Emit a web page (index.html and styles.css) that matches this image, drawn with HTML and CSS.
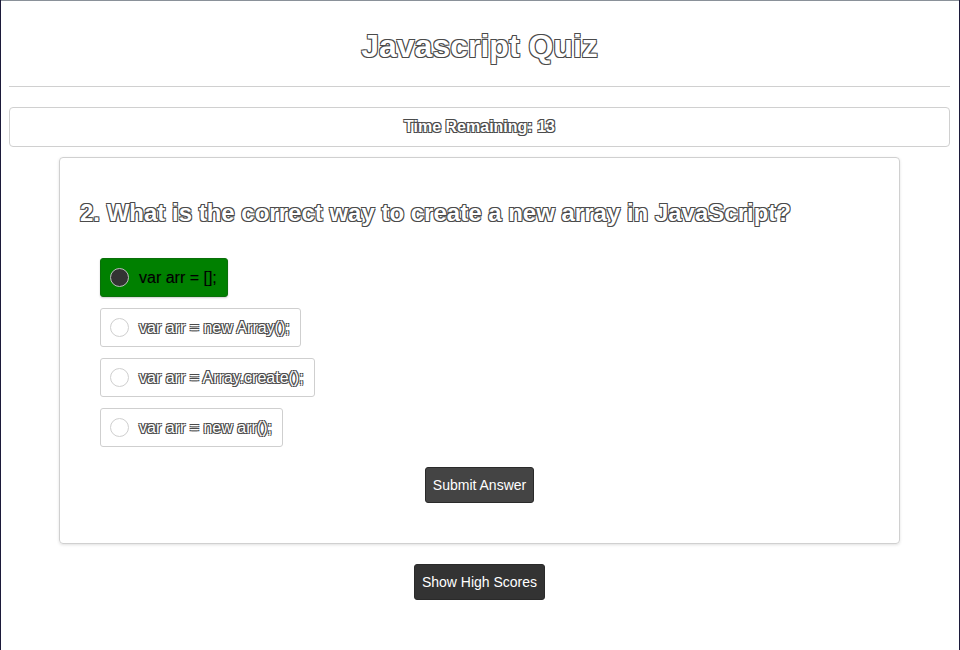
FILE: index.html
```html
<!DOCTYPE html>
<html>
<head>
<meta charset="utf-8">
<link rel="stylesheet" href="styles.css">
</head>
<body>
<div class="page">
  <header class="header">
    <h1 class="title outline">Javascript Quiz</h1>
  </header>
  <hr class="rule">
  <div class="timer outline">Time Remaining: 13</div>
  <section class="card">
    <h2 class="question outline">2. What is the correct way to create a new array in JavaScript?</h2>
    <div class="options">
      <label class="option selected"><span class="radio"></span><span class="opt-text">var arr = [];</span></label>
      <label class="option"><span class="radio"></span><span class="opt-text outline">var arr = new Array();</span></label>
      <label class="option"><span class="radio"></span><span class="opt-text outline">var arr = Array.create();</span></label>
      <label class="option"><span class="radio"></span><span class="opt-text outline">var arr = new arr();</span></label>
    </div>
    <div class="actions">
      <button class="btn submit">Submit Answer</button>
    </div>
  </section>
  <div class="actions bottom">
    <button class="btn scores">Show High Scores</button>
  </div>
</div>
</body>
</html>
```
FILE: styles.css
```css
html, body {
  margin: 0;
  padding: 0;
  background: #1c1a3a;
}
.page {
  box-sizing: border-box;
  height: 650px;
  margin: 0 1px;
  background: #fff;
  border-top: 1px solid #8a9199;
  padding: 0 9px 0 8px;
  font-family: "Liberation Sans", Arial, sans-serif;
}
.outline {
  color: #fff;
  text-shadow: -1px -1px 0 #4a4a4a, 1px -1px 0 #4a4a4a, -1px 1px 0 #4a4a4a, 1px 1px 0 #4a4a4a;
}
.header {
  display: flex;
  justify-content: center;
  padding-top: 27px;
}
.title {
  margin: 0;
  font-size: 32px;
  line-height: 37px;
  font-weight: bold;
}
.rule {
  margin: 21px 0 0;
  border: 0;
  border-top: 1px solid #d0d0d0;
}
.timer {
  margin-top: 20px;
  height: 38px;
  border: 1px solid #d0d0d0;
  border-radius: 4px;
  display: flex;
  align-items: center;
  justify-content: center;
  font-weight: bold;
  font-size: 16px;
}
.card {
  margin: 10px 50px 0;
  border: 1px solid #d0d0d0;
  border-radius: 4px;
  box-shadow: 0 1px 3px rgba(0,0,0,0.12);
  padding: 40px 20px 40px;
}
.question {
  margin: 0 0 30px;
  font-size: 24px;
  line-height: 30px;
  font-weight: bold;
}
.options {
  display: flex;
  flex-direction: column;
  align-items: flex-start;
  gap: 11px;
  padding-left: 20px;
}
.option {
  display: flex;
  align-items: center;
  gap: 10px;
  height: 37px;
  padding: 0 10px 0 9px;
  border: 1px solid #cfcfcf;
  border-radius: 3px;
  font-size: 16px;
}
.option.selected {
  background: #008000;
  border-color: #0a6f0a;
  box-shadow: 0 1px 2px rgba(0,0,0,0.2);
}
.radio {
  box-sizing: border-box;
  width: 19px;
  height: 19px;
  border-radius: 50%;
  border: 1px solid #cfcfcf;
  background: #fff;
}
.selected .radio {
  background: #333;
  border: 1.5px solid #bdbdbd;
}
.selected .opt-text {
  color: #000;
  text-shadow: 0 0 1px rgba(0,0,0,0.3);
}
.actions {
  display: flex;
  justify-content: center;
  margin-top: 20px;
}
.btn {
  font-family: "Liberation Sans", Arial, sans-serif;
  font-size: 14px;
  color: #fff;
  border: 1px solid #2a2a2a;
  border-radius: 3px;
  cursor: pointer;
}
.submit {
  background: #444;
  height: 36px;
  padding: 0 7px;
}
.bottom {
  margin-top: 20px;
}
.scores {
  background: #333;
  height: 36px;
  padding: 0 7px;
}
```
